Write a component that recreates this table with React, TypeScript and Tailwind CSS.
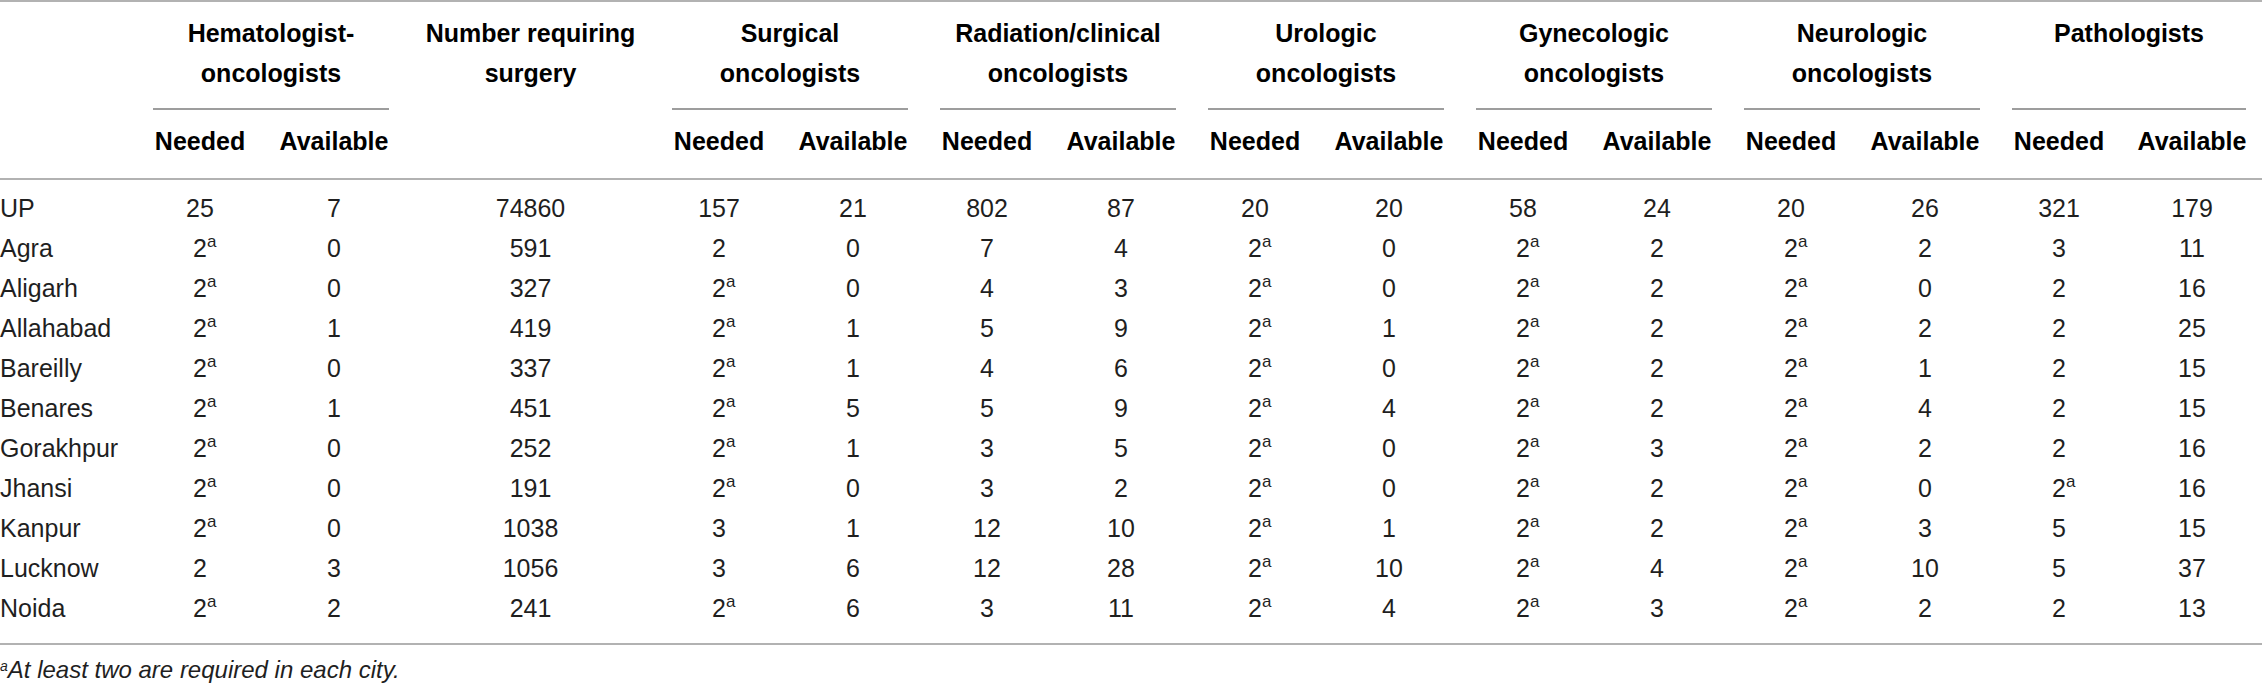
import React from "react";

// grid template shared by header and body rows
const cols =
  "grid grid-cols-[137px_126px_142px_251px_126px_142px_126px_142px_126px_142px_126px_142px_126px_142px_126px_140px]";

const groups: { key: string; title: React.ReactNode }[] = [
  { key: "hem", title: <>Hematologist-<br />oncologists</> },
  { key: "num", title: <>Number requiring<br />surgery</> },
  { key: "surg", title: <>Surgical<br />oncologists</> },
  { key: "rad", title: <>Radiation/clinical<br />oncologists</> },
  { key: "uro", title: <>Urologic<br />oncologists</> },
  { key: "gyn", title: <>Gynecologic<br />oncologists</> },
  { key: "neuro", title: <>Neurologic<br />oncologists</> },
  { key: "path", title: <>Pathologists</> },
];

const rows: string[][] = [
  ["UP", "25", "7", "74860", "157", "21", "802", "87", "20", "20", "58", "24", "20", "26", "321", "179"],
  ["Agra", "2a", "0", "591", "2", "0", "7", "4", "2a", "0", "2a", "2", "2a", "2", "3", "11"],
  ["Aligarh", "2a", "0", "327", "2a", "0", "4", "3", "2a", "0", "2a", "2", "2a", "0", "2", "16"],
  ["Allahabad", "2a", "1", "419", "2a", "1", "5", "9", "2a", "1", "2a", "2", "2a", "2", "2", "25"],
  ["Bareilly", "2a", "0", "337", "2a", "1", "4", "6", "2a", "0", "2a", "2", "2a", "1", "2", "15"],
  ["Benares", "2a", "1", "451", "2a", "5", "5", "9", "2a", "4", "2a", "2", "2a", "4", "2", "15"],
  ["Gorakhpur", "2a", "0", "252", "2a", "1", "3", "5", "2a", "0", "2a", "3", "2a", "2", "2", "16"],
  ["Jhansi", "2a", "0", "191", "2a", "0", "3", "2", "2a", "0", "2a", "2", "2a", "0", "2a", "16"],
  ["Kanpur", "2a", "0", "1038", "3", "1", "12", "10", "2a", "1", "2a", "2", "2a", "3", "5", "15"],
  ["Lucknow", "2", "3", "1056", "3", "6", "12", "28", "2a", "10", "2a", "4", "2a", "10", "5", "37"],
  ["Noida", "2a", "2", "241", "2a", "6", "3", "11", "2a", "4", "2a", "3", "2a", "2", "2", "13"],
];

function Value({ v }: { v: string }) {
  // footnote marker hangs to the right so the number itself stays centred
  if (v.endsWith("a")) {
    return (
      <span className="relative">
        {v.slice(0, -1)}
        <span className="absolute left-full top-[-1px] text-[17px] leading-none">a</span>
      </span>
    );
  }
  return <span>{v}</span>;
}

function GroupHeader({ title, last }: { title: React.ReactNode; last?: boolean }) {
  return (
    <div className="col-span-2 flex flex-col">
      <div className="h-[80px] text-center leading-[40px]">{title}</div>
      <div className="mx-4 mt-[15px] h-[2px] bg-[#9d9d9d]" />
      <div className={`mt-[11px] grid ${last ? "grid-cols-[126px_140px]" : "grid-cols-[126px_142px]"} text-center leading-[40px]`}>
        <div>Needed</div>
        <div>Available</div>
      </div>
    </div>
  );
}

export default function App() {
  return (
    <div className="w-[2262px] bg-white font-['Liberation_Sans',Arial,sans-serif] text-[25px]">
      <div className="border-t-2 border-b-2 border-[#b2b2b2]">
        {/* header */}
        <div className={`${cols} pt-[11px] pb-[17px] font-bold text-black`}>
          <div />
          <GroupHeader title={groups[0].title} />
          <div className="text-center leading-[40px]">{groups[1].title}</div>
          {groups.slice(2).map((g, i) => (
            <GroupHeader key={g.key} title={g.title} last={i === groups.length - 3} />
          ))}
        </div>

        {/* body */}
        <div className="border-t-2 border-[#b2b2b2] pt-2 pb-[15px] text-[#1f1f1f]">
          {rows.map((r) => (
            <div key={r[0]} className={`${cols} h-[40px] leading-[40px]`}>
              <div className="text-left">{r[0]}</div>
              {r.slice(1).map((v, j) => (
                <div key={j} className="text-center">
                  <Value v={v} />
                </div>
              ))}
            </div>
          ))}
        </div>
      </div>

      <p className="mt-[9px] text-[24px] italic leading-[32px] text-[#1f1f1f]">
        <span className="relative top-[-7px] text-[14px]">a</span>At least two are required in each city.
      </p>
    </div>
  );
}
